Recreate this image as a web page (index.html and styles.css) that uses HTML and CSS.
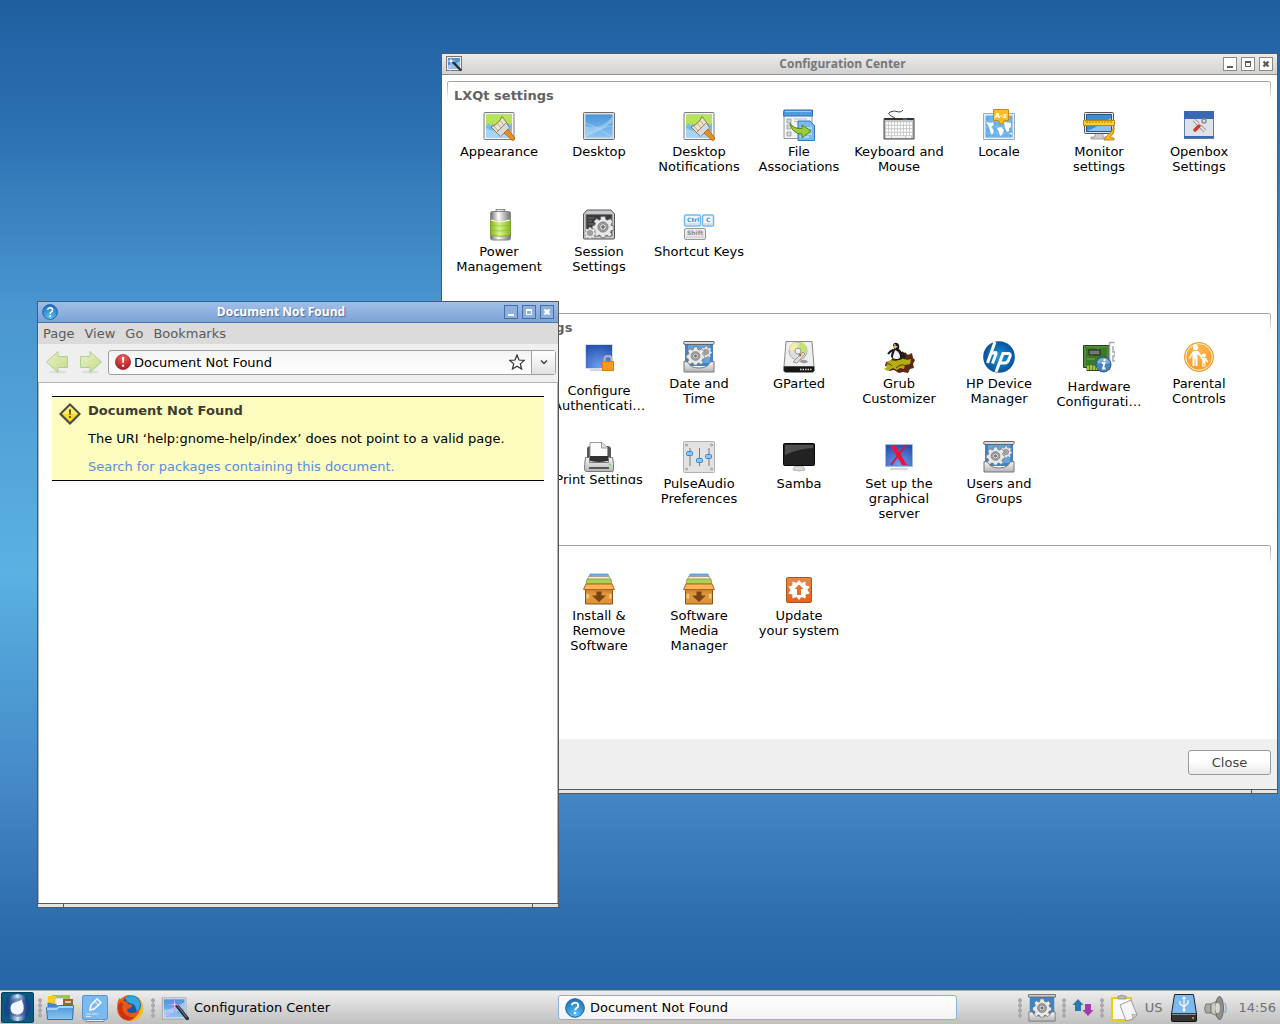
FILE: index.html
```html
<!DOCTYPE html>
<html lang="en">
<head>
<meta charset="utf-8">
<meta name="viewport" content="width=device-width, initial-scale=1">
<title>Desktop</title>
<link rel="stylesheet" href="styles.css">
</head>
<body>
<svg class="sprite" aria-hidden="true">
  <defs>
    <linearGradient id="g-sky" x1="0" y1="0" x2="0" y2="1"><stop offset="0" stop-color="#4a94d8"/><stop offset="1" stop-color="#8cc6f2"/></linearGradient>
    <linearGradient id="g-metal" x1="0" y1="0" x2="0" y2="1"><stop offset="0" stop-color="#f6f6f6"/><stop offset="1" stop-color="#b4b4b4"/></linearGradient>
    <linearGradient id="g-box" x1="0" y1="0" x2="0" y2="1"><stop offset="0" stop-color="#c27a26"/><stop offset="0.4" stop-color="#e39a3e"/><stop offset="1" stop-color="#dd9136"/></linearGradient>
    <linearGradient id="g-orange" x1="0" y1="0" x2="0" y2="1"><stop offset="0" stop-color="#e08a4c"/><stop offset="1" stop-color="#e8601c"/></linearGradient>
    <linearGradient id="g-leaf" x1="0" y1="0" x2="1" y2="1"><stop offset="0" stop-color="#ebefc0"/><stop offset="1" stop-color="#c3dc8c"/></linearGradient>
    <linearGradient id="g-cell" x1="0" y1="0" x2="1" y2="0"><stop offset="0" stop-color="#86b81e"/><stop offset="0.45" stop-color="#d8f48a"/><stop offset="1" stop-color="#84b81c"/></linearGradient>
    <linearGradient id="g-cap" x1="0" y1="0" x2="1" y2="0"><stop offset="0" stop-color="#6c6c6c"/><stop offset="0.4" stop-color="#fff"/><stop offset="1" stop-color="#707070"/></linearGradient>
    <linearGradient id="g-beam" x1="0" y1="0" x2="1" y2="0"><stop offset="0" stop-color="#c8daf0" stop-opacity="0"/><stop offset="0.5" stop-color="#d5e4f4"/><stop offset="1" stop-color="#c8daf0" stop-opacity="0"/></linearGradient>
    <radialGradient id="g-blue" cx="0.5" cy="0.9" r="0.9"><stop offset="0" stop-color="#6b9ef0"/><stop offset="1" stop-color="#2750b0"/></radialGradient>
    <radialGradient id="g-help" cx="0.5" cy="0.9" r="0.9"><stop offset="0" stop-color="#5cc4f6"/><stop offset="1" stop-color="#1b70bd"/></radialGradient>
    <radialGradient id="g-red" cx="0.5" cy="0.2" r="0.9"><stop offset="0" stop-color="#f0605a"/><stop offset="1" stop-color="#a80f1c"/></radialGradient>
    <radialGradient id="g-hp" cx="0.5" cy="0.5" r="0.6"><stop offset="0" stop-color="#1d9ae0"/><stop offset="1" stop-color="#02438e"/></radialGradient>
    <radialGradient id="g-amber" cx="0.5" cy="0.3" r="0.8"><stop offset="0" stop-color="#fbb64e"/><stop offset="1" stop-color="#f39a22"/></radialGradient>
  </defs>

  <symbol id="gear" viewBox="-10 -10 20 20">
    <g fill="#e8e8e8" stroke="#686868" stroke-width="0.7">
      <path d="M-2-9.500h4l.6 2.600 1.600.7L6.600-7.600 9-4.800 7.400-2.500l.5 1.500 2 .3v3.400l-2.300.5-.8 1.600 1.400 2.200L5.800 9 3.600 7.400l-1.500.6L1.600 9.700h-3.200L-2.200 8l-1.600-.7L-6 9-8.500 6.500-7.200 4.500-7.800 3-9.800 2.500V-1l2.200-.5.700-1.600L-8.300-5.200l2.700-2.500 2 1.500 1.300-.6z"/>
      <circle r="4.600" fill="#aaa"/><circle r="3" fill="#eee"/><circle r="1.300" fill="#777"/>
    </g>
  </symbol>

  <symbol id="appearance" viewBox="0 0 32 32">
    <rect x="1" y="3.500" width="30" height="27" rx="1" fill="#f4f4f4" stroke="#7b7b7b"/>
    <rect x="3" y="5.500" width="26" height="23" fill="#7ab9ea"/>
    <path d="M3 5.500h26v9l-3 1-3-2-3 2-4-2-4 3-3-2-1 3-2-3-3 2z" fill="#b9e356"/>
    <path d="M3 19q8 5 13 1t13 3v5.500H3z" fill="#a7d4f4"/>
    <path d="M19 7.500l6 8-10 9.500-7-7q8-3 11-10.500z" fill="#ede3cf" stroke="#6f5d43" stroke-width="0.800"/>
    <path d="M11 17l4 5M14.500 14.500l4 5M17.500 11.500l4 6" stroke="#b8a98a" fill="none"/>
    <path d="M23.500 13.500l3 5.500-9 8.500-4-4z" fill="#d9d9d9" stroke="#777" stroke-width="0.800"/>
    <path d="M21 24l4-4 6.500 8.500q.8 3-2.500 3l-5-5z" fill="#e88f1d" stroke="#a9610b" stroke-width="0.800"/>
  </symbol>

  <symbol id="services" viewBox="0 0 32 32">
    <rect x="2" y="3" width="28" height="22" fill="#3f83c8"/>
    <path d="M5 4l22 0v18H5z" fill="#64a4dd"/>
    <path d="M.5 1.500Q.5.500 2 .5h28q1.500 0 1.500 1T30 3.500H2Q.5 3.500.5 1.500z" fill="#d5d8d4" stroke="#666"/>
    <path d="M1 31V20.500l4 .5q2 6 11 6t11-6l4-.5V31z" fill="url(#g-metal)" stroke="#777"/>
    <use href="#gear" x="17" y="4.500" width="12" height="13"/>
    <use href="#gear" x="3" y="5" width="19" height="20"/>
  </symbol>

  <symbol id="package" viewBox="0 0 32 32">
    <path d="M7 1h18l1 4H6z" fill="#6fb0ec" stroke="#4786c6" stroke-width="0.700"/>
    <path d="M5.500 3.500h21l1 4h-23z" fill="#f2e8dc" stroke="#aa8872" stroke-width="0.700"/>
    <path d="M4 6h24l1 5H3z" fill="#a6d356" stroke="#6f9c28" stroke-width="0.700"/>
    <path d="M2.500 15.500h27V31h-27z" fill="url(#g-box)" stroke="#8c5414"/>
    <path d="M3 11h26l2.500 5.500H.5z" fill="#ffb25a" stroke="#a9641c"/>
    <path d="M13.500 18.500h5v4H23l-7 6.500-7-6.500h4.500z" fill="#7a4312"/>
    <path d="M3.500 21h2.500v4.500H3.500zM26 21h2.500v4.500H26z" fill="#f5c78c"/>
  </symbol>

  <symbol id="wizard" viewBox="0 0 32 32">
    <rect x="1.500" y="4.500" width="27" height="24" fill="#f6f6f6" stroke="#9a9a9a"/>
    <rect x="3" y="6" width="24" height="21" fill="url(#g-sky)"/>
    <path d="M3 18q10 0 24-9v8Q15 20 3 27z" fill="#bfe0f8" opacity=".6"/>
    <path d="M18 13l12 15" stroke="#2d2d33" stroke-width="4" stroke-linecap="round"/>
    <path d="M18.500 12.500l10.500 14" stroke="#8e8e98"/>
    <path d="M15.500 5l.7 6.300 6.300.7-6.300.7-.7 8.300-.7-8.300-6.300-.7 6.300-.7zM8 20l.6 2.400 2.400.6-2.400.6L8 26l-.6-2.400L5 23l2.400-.6z" fill="#fbe0ff" stroke="#d07cec" stroke-width="0.700"/>
  </symbol>

  <symbol id="wizard-small" viewBox="0 0 16 16">
    <rect x=".5" y=".5" width="15" height="14" fill="#f0f0f0" stroke="#777"/>
    <rect x="2" y="2" width="12" height="11" fill="#4d94d8"/>
    <path d="M2 9q6 0 12-4v8H2z" fill="#8fc4f0"/>
    <path d="M7 6l8 8.500" stroke="#2d2d33" stroke-width="2.500"/>
    <path d="M5 1v9M1 5h8M4 9v6" stroke="#f0b8fa"/>
    <circle cx="5" cy="5" r="1.300" fill="#fff"/>
  </symbol>

  <symbol id="help" viewBox="0 0 20 20">
    <circle cx="10" cy="10" r="9.300" fill="url(#g-help)" stroke="#1a5c9e"/>
    <path d="M6.800 7.200Q7.500 4.700 10.200 4.700q3 .1 3 2.700 0 1.600-1.700 2.700-1.300.9-1.300 2.300" fill="none" stroke="#fff" stroke-width="1.800"/>
    <circle cx="10.100" cy="15" r="1.200" fill="#fff"/>
  </symbol>

  <symbol id="minimise" viewBox="0 0 14 14"><path d="M4 9h6v2H4z" fill="currentColor"/></symbol>
  <symbol id="maximise" viewBox="0 0 14 14"><path d="M4.500 4.500h5v5h-5z" fill="none" stroke="currentColor"/><path d="M4 5h6" stroke="currentColor" stroke-width="2"/></symbol>
  <symbol id="shut" viewBox="0 0 14 14"><path d="M4.500 4.500l5 5m0-5l-5 5" stroke="currentColor" stroke-width="2.400"/></symbol>
</svg>

<main class="desktop">
  <section class="window config" aria-labelledby="config-title">
    <header class="titlebar">
      <svg class="title-icon" aria-hidden="true"><use href="#wizard-small"/></svg>
      <h1 class="title" id="config-title">Configuration Center</h1>
      <div class="controls">
        <button class="control" type="button" aria-label="Minimise"><svg><use href="#minimise"/></svg></button>
        <button class="control" type="button" aria-label="Maximise"><svg><use href="#maximise"/></svg></button>
        <button class="control" type="button" aria-label="Close"><svg><use href="#shut"/></svg></button>
      </div>
    </header>

    <div class="groups">
      <section class="group">
        <h2 class="group-title">LXQt settings</h2>
        <div class="items">
          <button class="item" type="button"><svg class="icon"><use href="#appearance"/></svg><span class="label">Appearance</span></button>
          <button class="item" type="button">
            <svg class="icon" viewBox="0 0 32 32"><rect x=".5" y="3.500" width="31" height="27" rx="1" fill="#ddd" stroke="#6e6e6e"/><rect x="2.500" y="5.500" width="27" height="23" fill="url(#g-sky)"/><path d="M3 17q14 5 26-9v5Q17 23 3 28z" fill="#a9d6f5" opacity=".6"/><path d="M3 14q13 5 26 14M3 26q15-8 26-9" fill="none" stroke="#b9def7" stroke-width=".6"/></svg>
            <span class="label">Desktop</span></button>
          <button class="item" type="button"><svg class="icon"><use href="#appearance"/></svg><span class="label">Desktop Notifications</span></button>
          <button class="item" type="button">
            <svg class="icon" viewBox="0 0 32 32"><path d="M1 1.500h28v28H1z" fill="#f3f3f3" stroke="#999"/><path d="M1 1h28.500v6H.5z" fill="#4f9be0" stroke="#2d6fb4"/><path d="M2 2.500h26" stroke="#9ccaf2"/><path d="M4 10h4v4H4zM4 16h4v4H4zM4 23h4v4H4z" fill="#c9d9e6" stroke="#999" stroke-width=".8"/><path d="M11 10h13M11 12.500h10" stroke="#bbb"/><path d="M15 12h12l4.500 4.500v15H15z" fill="#7db9ee" stroke="#2f78bf"/><path d="M17 19h12M17 22h12M17 25h12M17 28h9" stroke="#e3f1fd"/><path d="M7 14q3 6 12 5.500V16l9 6-9 7v-4Q9 25 7 14z" fill="#9ccc3c" stroke="#4f8613"/></svg>
            <span class="label">File Associations</span></button>
          <button class="item" type="button">
            <svg class="icon" viewBox="0 0 32 32"><path d="M12 9Q3 5 7 3t9 0q3 0 4-2" fill="none" stroke="#444"/><path d="M1 9.500h30V30H1z" fill="#c4c4c4" stroke="#444"/><path d="M1.500 10h29" stroke="#333" stroke-width="2"/><path d="M20 10h4" stroke="#4a90d9"/><path d="M3 14.500h26M3 18h26M3 21.500h26M3 25h26" stroke="#fff" stroke-width="2.500" stroke-dasharray="2.200 .8"/><path d="M3 28h26" stroke="#fff" stroke-width="1.500" stroke-dasharray="5 1 13 1"/></svg>
            <span class="label">Keyboard and Mouse</span></button>
          <button class="item" type="button">
            <svg class="icon" viewBox="0 0 32 32"><path d="M.5 4.500h31v26H.5z" fill="#e4eef7" stroke="#a2abb3"/><path d="M2.500 6.500h27v22h-27z" fill="#65aeea"/><path d="M2.500 12h27M2.500 18h27M2.500 24h27M8 6v22M14 6v22M20 6v22M26 6v22" stroke="#92c7f2" stroke-width=".7"/><path d="M3 13l5 1 2-1 1 3-3 2 2 2 1 2-2 4-2-4-1-4zM14 19l4-1 3 3-2 5-2 1-1-4zM21 13l7 1v4l-2 1 0 3-2 1-2-4zM26 24l3 0v2z" fill="#fff"/><path d="M10.500.5h15v11h-4L18.500 16l-3-4.500h-5z" fill="#fcbd1e" stroke="#cc8c08"/><text class="bubble" x="18" y="8.500">A-z</text></svg>
            <span class="label">Locale</span></button>
          <button class="item" type="button">
            <svg class="icon" viewBox="0 0 32 32"><path d="M12 24h8v4h4v2H8v-2h4z" fill="#ccc" stroke="#888" stroke-width=".7"/><rect x="1.500" y="3.500" width="29" height="21" rx="1" fill="#e4e4e4" stroke="#555"/><path d="M3.500 5.500h25v17h-25z" fill="#3f8cd0" stroke="#245a8f"/><path d="M4 22q10-4 24-13v13z" fill="#86c1f0"/><path d="M.5 11.500h31v5H.5z" fill="#fcd02a" stroke="#b98a08"/><path d="M4 12v2M7 12v2M10 12v2M13 12v2M16 12v2M19 12v2M22 12v2M25 12v2M28 12v2" stroke="#8a6606" stroke-width=".8"/><path d="M31 17.500q1 7-4 10.500l4 1v2H21q2-4 5-6 3-2 5-7.500z" fill="#f8b81c" stroke="#b97f08" stroke-width=".8"/></svg>
            <span class="label">Monitor settings</span></button>
          <button class="item" type="button">
            <svg class="icon" viewBox="0 0 32 32"><rect x="1.500" y="2.500" width="29" height="27" fill="#dfe2e8" stroke="#6a7fa8"/><path d="M1 2h30v8H1zM1 27h30v2H1z" fill="#3a68b4"/><path d="M11 11l11 11" stroke="#888" stroke-width="3.500"/><path d="M11 11l11 11M21 11l-5 5" stroke="#e5e5e5" stroke-width="2"/><path d="M12 21l4-4" stroke="#d6382e" stroke-width="3.500" stroke-linecap="round"/><circle cx="21" cy="12" r="2" fill="none" stroke="#8f8f8f" stroke-width="1.500"/></svg>
            <span class="label">Openbox Settings</span></button>
          <button class="item" type="button">
            <svg class="icon" viewBox="0 0 32 32"><path d="M13 .5h9V3h5v4H8V3h5z" fill="url(#g-cap)" stroke="#777" stroke-width=".8"/><rect x="7.500" y="2.500" width="20" height="28.500" rx="2" fill="url(#g-cap)" stroke="#888"/><path d="M7.500 11q10 3 20 0v15q-10 3-20 0z" fill="url(#g-cell)" stroke="#75a31b" stroke-width=".7"/><path d="M8 16q9 2 19 0M8 21q9 2 19 0" fill="none" stroke="#86b62c" stroke-width=".6"/><path d="M8 11q9 3 19 0" fill="none" stroke="#f7ffe4" stroke-width="1.200"/></svg>
            <span class="label">Power Management</span></button>
          <button class="item" type="button">
            <svg class="icon" viewBox="0 0 32 32"><path d="M4 1h24l3.500 4v24q0 1-1 1h-29q-1 0-1-1V5z" fill="#c9c9c9" stroke="#555"/><path d="M3 5.500h26V27H3z" fill="#3a3b40" stroke="#777"/><path d="M5 9h6M5 12h4M5 15h6" stroke="#777"/><use href="#gear" x="9" y="6" width="22" height="24"/><use href="#gear" x="1" y="18" width="12" height="12"/></svg>
            <span class="label">Session Settings</span></button>
          <button class="item" type="button">
            <svg class="icon" viewBox="0 0 32 32"><g fill="#f2f4f6" stroke="#6cbcf2" stroke-width="1.500"><rect x="1.500" y="6" width="16" height="11" rx="1.500"/><rect x="19.500" y="6" width="11" height="11" rx="1.500"/></g><rect x="1.500" y="19.500" width="21" height="11" rx="1.500" fill="#e9e9e9" stroke="#999"/><path d="M3 28h18M3 15h13M21 15h8" stroke="#c4c9cd"/><g class="key-legend"><text x="4" y="13" fill="#3f93d6">Ctrl</text><text x="23" y="13" fill="#3f93d6">C</text><text x="4" y="26" fill="#888">Shift</text></g></svg>
            <span class="label">Shortcut Keys</span></button>
        </div>
      </section>

      <section class="group">
        <h2 class="group-title">System settings</h2>
        <div class="items items-second">
          <button class="item item-low" type="button">
            <svg class="icon" viewBox="0 0 32 32"><path d="M2.500 3.500h27v24h-27z" fill="url(#g-blue)" stroke="#d3dff2"/><path d="M7 28h14v2H7z" fill="#cdd8e2"/><path d="M21.500 22v-4q0-3 3.500-3t3.500 3v4" fill="none" stroke="#b8b8b8" stroke-width="2"/><rect x="19.500" y="20.500" width="11" height="9" fill="#fb9a1a" stroke="#e47c05"/></svg>
            <span class="label">Configure Authenticati…</span></button>
          <button class="item" type="button"><svg class="icon"><use href="#services"/></svg><span class="label">Date and Time</span></button>
          <button class="item" type="button">
            <svg class="icon" viewBox="0 0 32 32"><path d="M3 .5h26l2 25H1z" fill="#efefef" stroke="#888"/><circle cx="15" cy="10" r="9" fill="#dedede" stroke="#aaa"/><path d="M15 10l2-9q7 2 7 10l-4 4z" fill="#c6e46c"/><path d="M6 9q1-6 7-8l2 8z" fill="#f5f0a0"/><circle cx="15" cy="10" r="3" fill="#eee" stroke="#999"/><path d="M10 21l10-10 2 2-8 9z" fill="#ddd" stroke="#888" stroke-width=".8"/><circle cx="17" cy="14" r="1.300" fill="#e3501e"/><path d="M16 20q7-3 9 1-5 3-9-1z" fill="#999"/><path d="M.5 25.500h31V30l-2 1.500h-27l-2-1.500z" fill="#161616"/><path d="M17 28.500h12" stroke="#ddd" stroke-width="1.500" stroke-dasharray="1.500 1"/></svg>
            <span class="label">GParted</span></button>
          <button class="item" type="button">
            <svg class="icon" viewBox="0 0 32 32"><path d="M11 16q4-5 9-2l2-3 3 3 4-2 1 5 2 2-2 4 1 4-4 1-2 4-5-1-4 1-5-3-5 1 0-4-4-1 1-4 4-1z" fill="#5c2612"/><path d="M3 23l4-4 6 1 7-3 4 2 4-1-1 5-5 1-1 4-4-1-3 2-4-2-5 3-4-2 3-2z" fill="#b2ae10"/><path d="M2 24q4-3 7 1M13 27q5-5 10-2" fill="none" stroke="#6d2b15"/><path d="M10 4q1-3 4-2t2 6q4 3 4 8 0 3-5 3t-7-3q0-5 3-8z" fill="#17191e"/><path d="M12 9q5 2 5 7 0 2-4 2t-3-3z" fill="#f0f1f4"/><path d="M5 13q3-4 6-4M19 11q3 3 2 7" fill="none" stroke="#17191e" stroke-width="2"/><path d="M10 5h5l-3 3z" fill="#f6c51a"/><circle cx="12" cy="4" r=".8" fill="#fff"/></svg>
            <span class="label">Grub Customizer</span></button>
          <button class="item" type="button">
            <svg class="icon" viewBox="0 0 32 32"><circle cx="16" cy="16" r="15.800" fill="url(#g-hp)"/><path d="M12 1L4.500 22M8 13q6-3 5 0l-3.500 9.500" fill="none" stroke="#fff" stroke-width="3"/><path d="M13 31l7-18.500h5q3 0 2 3L25.500 19q-1 3-4 3h-4" fill="none" stroke="#fff" stroke-width="3"/></svg>
            <span class="label">HP Device Manager</span></button>
          <button class="item item-mid" type="button">
            <svg class="icon" viewBox="0 0 32 32"><path d="M.5 4.500H26v22h-9v3H4v-3H.5z" fill="#4d8a34" stroke="#24491a"/><path d="M3 7h21v17H3z" fill="#3d7728"/><path d="M4 18h8M15 7v2M5 14h5M18 17h5" stroke="#78b055"/><rect x="6" y="9" width="11" height="5" fill="#777" stroke="#1e1e1e"/><path d="M5 25v4M8 24v5M11 25v4M14 24v5" stroke="#d4d23c" stroke-width="1.500"/><path d="M31.500 1.500H28Q26.500 1 26.500 3v26M30 5v6h2v4h-2v5h2" fill="none" stroke="#aaa" stroke-width="1.500"/><circle cx="20.500" cy="23.500" r="7.500" fill="#4583bd" stroke="#245787"/><path d="M14 22q1-5 6.500-5t6.500 5q-6 2-13 0z" fill="#7bacdb"/><path d="M19 22h2.500l-1.500 5.500h2.500" fill="none" stroke="#fff" stroke-width="1.800"/><circle cx="21.500" cy="19" r="1.200" fill="#fff"/></svg>
            <span class="label">Hardware Configurati…</span></button>
          <button class="item" type="button">
            <svg class="icon" viewBox="0 0 32 32"><circle cx="16" cy="16" r="14.500" fill="url(#g-amber)" stroke="#e89b32"/><circle cx="16" cy="16" r="13.300" fill="none" stroke="#fff3dc"/><g fill="#fff"><circle cx="12.500" cy="6.500" r="2.700"/><path d="M10 10h5l5 6-1.200 1-4.300-4v12h-2v-7h-1v7h-2v-12l-2.500 5-1.500-.8z"/><circle cx="21" cy="14.500" r="2"/><path d="M19.500 17h3.500l2.500 4-1 .7-2-2.500V26h-1v-4h-1v4h-1.200v-7l-2-2 .7-1z"/></g></svg>
            <span class="label">Parental Controls</span></button>
          <button class="item item-clipped" type="button">
            <svg class="icon" viewBox="0 1 32 32"><path d="M4 9q0-3 4-3h16q4 0 4 3v11H4z" fill="#555"/><path d="M7 2.500h12l5.500 5V18H7z" fill="#fafafa" stroke="#999"/><path d="M18.500 2.500v5.500H24" fill="#ddd" stroke="#999"/><path d="M7 16h18v5q-9 2-18 0z" fill="#303030"/><path d="M2.500 17.500h4v5h19v-5h4q1.500 6 1 11t-2 3h-25q-2 0-2-3t1-11z" fill="url(#g-metal)" stroke="#777"/><path d="M6 28h20" stroke="#333" stroke-width="1.500"/><circle cx="27" cy="24.500" r="1" fill="#5fdc28"/></svg>
            <span class="label">Print Settings</span></button>
          <button class="item" type="button">
            <svg class="icon" viewBox="0 0 32 32"><rect x=".5" y=".5" width="31" height="31" rx="1" fill="#e2e2e2" stroke="#b0b0b0"/><g fill="none" stroke="#888" stroke-width=".8"><circle cx="3.500" cy="4" r="1"/><circle cx="28.500" cy="4" r="1"/><circle cx="3.500" cy="28" r="1"/><circle cx="28.500" cy="28" r="1"/></g><path d="M7 7v18M16.500 7v18M26 7v18" stroke="#777"/><g fill="#88c5f5" stroke="#3b87c8"><rect x="3.500" y="10.500" width="6" height="4" rx="1"/><rect x="13.500" y="17.500" width="6" height="4" rx="1"/><rect x="22.500" y="13.500" width="6" height="4" rx="1"/></g></svg>
            <span class="label">PulseAudio Preferences</span></button>
          <button class="item" type="button">
            <svg class="icon" viewBox="0 0 32 32"><path d="M12 25h8l2 4q-6 2-12 0z" fill="#d8d8d8" stroke="#aaa" stroke-width=".8"/><rect x=".5" y="2.500" width="31" height="22" rx="1" fill="#222" stroke="#080808"/><path d="M2 4h28v3Q14 8 2 14z" fill="#505050"/></svg>
            <span class="label">Samba</span></button>
          <button class="item" type="button">
            <svg class="icon" viewBox="0 0 32 32"><path d="M2.500 3.500h27v22h-27z" fill="url(#g-blue)" stroke="#a8bce2"/><path d="M7 27h18v2H7z" fill="#d0d9dd"/><path d="M7 4l5 0 12 20h-5z" fill="#f0123c"/><path d="M23 4L8 24" stroke="#d3183c" stroke-width="2"/></svg>
            <span class="label">Set up the graphical server</span></button>
          <button class="item" type="button"><svg class="icon"><use href="#services"/></svg><span class="label">Users and Groups</span></button>
        </div>
      </section>

      <section class="group">
        <div class="items items-third">
          <button class="item" type="button"><svg class="icon"><use href="#package"/></svg><span class="label">Install &amp; Remove Software</span></button>
          <button class="item" type="button"><svg class="icon"><use href="#package"/></svg><span class="label">Software Media Manager</span></button>
          <button class="item" type="button">
            <svg class="icon" viewBox="0 0 32 32"><rect x="3.500" y="4.500" width="25" height="25" rx="1.500" fill="url(#g-orange)" stroke="#b5501c"/><path d="M16 7l2.500 3 4-1.500.2 4 4 1-2.200 3.500 2.200 3.500-4 1-.2 4-4-1.500L16 27l-2.500-3-4 1.500-.2-4-4-1L7.500 17l-2.200-3.500 4-1 .2-4 4 1.500z" fill="#fff"/><path d="M16 11.500l4.500 4.500h-2.500v6h-4v-6h-2.500z" fill="#e3702c"/></svg>
            <span class="label">Update<br>your system</span></button>
        </div>
      </section>
    </div>

    <footer class="actions"><button class="close" type="button">Close</button></footer>
    <div class="grip"></div>
  </section>

  <section class="window document" aria-labelledby="document-title">
    <header class="titlebar">
      <svg class="title-icon" aria-hidden="true"><use href="#help"/></svg>
      <h1 class="title" id="document-title">Document Not Found</h1>
      <div class="controls">
        <button class="control" type="button" aria-label="Minimise"><svg><use href="#minimise"/></svg></button>
        <button class="control" type="button" aria-label="Maximise"><svg><use href="#maximise"/></svg></button>
        <button class="control" type="button" aria-label="Close"><svg><use href="#shut"/></svg></button>
      </div>
    </header>
    <nav class="menubar">
      <button type="button">Page</button><button type="button">View</button><button type="button">Go</button><button type="button">Bookmarks</button>
    </nav>
    <div class="toolbar">
      <button class="arrow" type="button" aria-label="Back"><svg viewBox="0 0 24 24"><ellipse cx="13" cy="22" rx="9" ry="1.500" fill="#ddd"/><path d="M1.500 12L13 1.500v5h9.500v11H13v5z" fill="url(#g-leaf)" stroke="#b0cc9c"/></svg></button>
      <button class="arrow" type="button" aria-label="Forward"><svg viewBox="0 0 24 24"><ellipse cx="11" cy="22" rx="9" ry="1.500" fill="#ddd"/><path d="M22.500 12L11 1.500v5H1.500v11H11v5z" fill="url(#g-leaf)" stroke="#b0cc9c"/></svg></button>
      <div class="address">
        <svg class="address-icon" viewBox="0 0 16 16" aria-hidden="true"><circle cx="8" cy="8" r="7.600" fill="url(#g-red)" stroke="#8f1a22" stroke-width=".6"/><path d="M7 3h2.200l-.4 6H7.400z" fill="#fff"/><circle cx="8.100" cy="11.800" r="1.200" fill="#fff"/></svg>
        <input class="address-input" type="text" aria-label="Location" value="Document Not Found">
        <button class="star" type="button" aria-label="Bookmark"><svg viewBox="0 0 16 16"><path d="M8 1l2 5 5.300.4-4 3.500L12.600 15 8 12.200 3.400 15l1.300-5.100-4-3.500L6 6z" fill="none" stroke="#333" stroke-width="1.200"/></svg></button>
        <button class="drop" type="button" aria-label="History"><svg viewBox="0 0 10 10"><path d="M2 3.500L5 6.500l3-3" fill="none" stroke="#444" stroke-width="1.500"/></svg></button>
      </div>
    </div>
    <article class="page">
      <div class="notice">
        <svg class="notice-icon" viewBox="0 0 22 22" aria-hidden="true"><path d="M11 1l10 10-10 10L1 11z" fill="#4a4a46" stroke="#4a4a46" stroke-width="1.500" stroke-linejoin="round"/><path d="M11 3l8 8-8 8-8-8z" fill="#f8d820"/><path d="M11 3l8 8-16 0z" fill="#fbec70"/><path d="M10 6.500h2l-.4 5.500h-1.200z" fill="#4b400c"/><circle cx="11" cy="14" r="1.100" fill="#4b400c"/></svg>
        <div class="notice-text">
          <h2>Document Not Found</h2>
          <p>The URI ‘help:gnome-help/index’ does not point to a valid page.</p>
          <p><a href="#packages">Search for packages containing this document.</a></p>
        </div>
      </div>
    </article>
    <div class="grip"></div>
  </section>
</main>

<footer class="panel">
  <button class="start" type="button" aria-label="Menu"><svg viewBox="0 0 33 31"><rect x=".5" y=".5" width="32" height="30" rx="1.500" fill="#075a80" stroke="#03425f"/><circle cx="16.500" cy="15.500" r="13.500" fill="#1c4486"/><path d="M8 4.500q8.500-5 17 0v22q-8.500 5-17 0z" fill="url(#g-beam)"/><circle cx="16.500" cy="15.500" r="9.500" fill="#2c5796" opacity=".5"/><path d="M20.500 7q1 3 2 6 1.500 9-6 9.500-7 0-7-6.500 0-5 6-6 4-1 5-3z" fill="#f1f7fb"/></svg></button>
  <span class="handle"></span>
  <button class="launcher" type="button" aria-label="Files"><svg viewBox="0 0 28 28"><path d="M6 1h18v12H6z" fill="#9cc650"/><path d="M2 2h8v9H2z" fill="#fbcc22"/><path d="M9 4h9v9H9z" fill="#f4f0e8" stroke="#aaa" stroke-width=".6"/><path d="M17 5h10v8H17z" fill="#90663e"/><path d="M19 7h6v2h-6z" fill="#ddc7a8"/><path d="M1.500 8.500V25h25V12H12l-2-2z" fill="#4286c8"/><path d="M.5 13.500h10l2-2h15l-1 14h-25z" fill="url(#g-sky)" stroke="#2f70b0"/><path d="M1 13.500h10l2-1.500h14v2H13l-2 2H1z" fill="#a9d3f6"/></svg></button>
  <button class="launcher" type="button" aria-label="Editor"><svg viewBox="0 0 28 28"><path d="M5 24h18v3.500H5z" fill="#eee" stroke="#888"/><rect x="1.500" y="1.500" width="25" height="24" rx="1.500" fill="#7cb9f0" stroke="#5794d0"/><path d="M9 16l1-5 6-6 4 3.500-7 6.500z" fill="none" stroke="#fff" stroke-width="1.500"/><path d="M14 7.500l3.500 3.500" stroke="#fff"/><path d="M5 20h13M5 22.500h6" stroke="#d5eafc" stroke-dasharray="5 1"/></svg></button>
  <button class="launcher" type="button" aria-label="Browser"><svg viewBox="0 0 28 28"><circle cx="14" cy="14" r="13" fill="#e96616"/><path d="M14 1q9 0 12 8t-1 13-11 5q7-3 7-9z" fill="#f8bc20"/><circle cx="15.500" cy="11" r="9.500" fill="#1857a6"/><path d="M9 4q8-5 14 2 3 7-2 12-1-6-4-8-6-1-8-6z" fill="#35a7df"/><path d="M1.500 8l2-4 2 3q5-1 7 3l4 1q-1 3-5 4-1 4 4 4 6 0 8-4 0 8-9 10Q5 27 2 19z" fill="#e75718"/><path d="M2 11q2-3 5-2-2 7 2 11t10 3q-5 5-11 2t-6-14z" fill="#c9340f"/></svg></button>
  <span class="handle"></span>
  <div class="tasks">
    <button class="task" type="button"><svg class="task-icon task-icon-large"><use href="#wizard"/></svg>Configuration Center</button>
    <button class="task task-active" type="button"><svg class="task-icon"><use href="#help"/></svg>Document Not Found</button>
  </div>
  <div class="tray">
    <span class="handle"></span>
    <svg class="tray-icon" viewBox="0 0 32 32"><path d="M2 3h28v22H2z" fill="#3f83c8"/><path d="M.5.500h31v3H.5z" fill="#c8cbc8" stroke="#666"/><path d="M1 31V20.500h4q2 5 11 5t11-5h4V31z" fill="url(#g-metal)" stroke="#777"/><use href="#gear" x="5" y="5" width="22" height="22"/></svg>
    <span class="handle"></span>
    <svg class="tray-icon tray-icon-net" viewBox="0 0 22 22"><path d="M6 2l5.500 6H9v6H3V8H.5z" fill="#267cb0"/><path d="M16 19l-5.500-6H13V7h6v6h2.500z" fill="#a53ab0"/></svg>
    <span class="handle"></span>
    <svg class="tray-icon" viewBox="0 0 28 28"><path d="M2 4h19v22H2z" fill="#fafafa" stroke="#f2ca12" stroke-width="2"/><path d="M8 2h2q2-2 4 0h2v3H8z" fill="#bbb" stroke="#888" stroke-width=".8"/><path d="M10 11l11-5 6 15-4 4-7 2z" fill="#f5f5f5" stroke="#888" stroke-width=".8"/><path d="M27 21l-5-1 1 5z" fill="#ccc" stroke="#888" stroke-width=".5"/></svg>
    <span class="layout">US</span>
    <svg class="tray-icon" viewBox="0 0 28 28"><path d="M4.500.5h19L26.500 20h-25z" fill="#7cb9f0" stroke="#222"/><path d="M1.500 20h25v6q0 1.500-1 1.500h-23q-1 0-1-1.500z" fill="#333" stroke="#111"/><path d="M2 20.500h24" stroke="#888"/><path d="M14 4v12M10 7v3l4 3 4-4V6" fill="none" stroke="#fff" stroke-width="1.200"/><path d="M14 2l2 3h-4z" fill="#fff"/><circle cx="14" cy="16" r="1.500" fill="#fff"/><circle cx="23" cy="24" r="1" fill="#f5a21d"/></svg>
    <svg class="tray-icon" viewBox="0 0 28 28"><path d="M3 10h5v9H3q-3-4.500 0-9z" fill="#a9a9a4" stroke="#777"/><path d="M8 10q5-1 9-7v23q-4-6-9-7z" fill="#c9cac4" stroke="#777"/><ellipse cx="16.500" cy="14" rx="4" ry="11.500" fill="#8e8f8a" stroke="#6c6c68"/><ellipse cx="14.500" cy="14" rx="2.300" ry="5" fill="#d9d9d4"/><path d="M22 9q2 5 0 10" fill="none" stroke="#8cb5de" stroke-width="1.500"/></svg>
    <time class="clock">14:56</time>
  </div>
</footer>
</body>
</html>
```

FILE: styles.css
```css
* {
  box-sizing: border-box;
}

body {
  display: flex;
  flex-direction: column;
  min-height: 100vh;
  margin: 0;
  font: 13px/15px "DejaVu Sans", sans-serif;
  color: #000;
  background: linear-gradient(#1f5fa0 0%, #2b70b1 12%, #4a96d0 30%, #57abde 50%, #5ab1e2 56%, #509fd6 65%, #4488c6 77%, #2d6dae 90%, #2161a2 100%);
}

button,
input {
  padding: 0;
  border: 0;
  background: none;
  color: inherit;
  font: inherit;
}

h1,
h2,
p {
  margin: 0;
}

svg {
  display: block;
  flex: none;
}

.sprite {
  position: absolute;
  width: 0;
  height: 0;
}

.desktop {
  position: relative;
  flex: 1;
}

/* Windows */
.window {
  position: absolute;
  display: flex;
  flex-direction: column;
  border: 1px solid #56585c;
  background: #fff;
}

.config {
  top: 53px;
  left: 441px;
  width: 837px;
  min-height: 741px;
}

.document {
  top: 301px;
  left: 37px;
  width: 522px;
  min-height: 607px;
}

.titlebar {
  display: flex;
  align-items: center;
  height: 21px;
  padding: 0 4px;
  border-bottom: 1px solid #8e8e8e;
  background: linear-gradient(#ebebe9, #d3d2d0);
  color: #74777c;
}

.document .titlebar {
  border-color: #4f74a8;
  background: linear-gradient(#a0bfe8, #7ba3d6);
  color: #fff;
  text-shadow: 1px 1px 1px #4a6a98;
}

.title-icon {
  width: 16px;
  height: 16px;
}

.title {
  flex: 1;
  font: bold 12px/18px "Open Sans", sans-serif;
  text-align: center;
}

.controls {
  display: flex;
  gap: 4px;
}

.control {
  width: 14px;
  height: 14px;
  border: 1px solid #8c8a84;
  background: #fff;
  color: #5c5c58;
}

.control svg {
  width: 14px;
  height: 14px;
  margin: -1px;
}

.document .control {
  border-color: #466ea4;
  background: #8db0df;
  color: #fff;
}

.grip {
  height: 4px;
  border-top: 1px solid #56585c;
  background: linear-gradient(90deg, transparent 25px, #56585c 25px, #56585c 26px, transparent 26px, transparent calc(100% - 26px), #56585c calc(100% - 26px), #56585c calc(100% - 25px), transparent calc(100% - 25px)), #e4e4e2;
}

/* Configuration Center */
.groups {
  flex: 1;
  padding: 6px 6px 0 5px;
}

.group {
  height: 232px;
  border-top: 1px solid #a3a3a3;
  border-radius: 3px 3px 0 0;
  background:
    linear-gradient(#a3a3a3, transparent) left top / 1px 18px no-repeat,
    linear-gradient(#a3a3a3, transparent) right top / 1px 18px no-repeat;
}

.group:last-child {
  height: 193px;
}

.group-title {
  height: 27px;
  padding: 6px 7px 0;
  color: #636363;
  font-size: 13px;
  line-height: 15px;
}

.items {
  display: grid;
  grid-template-columns: repeat(auto-fill, 100px);
  grid-auto-rows: 100px;
  padding-left: 2px;
}

.items-second > :first-child,
.items-second > :nth-child(8),
.items-third > :first-child {
  grid-column-start: 2;
}

.items-third {
  padding-top: 27px;
}

.item {
  display: flex;
  flex-direction: column;
  align-items: center;
  gap: 3px;
}

.item-mid {
  gap: 6px;
}

.item-low {
  gap: 10px;
}

.item-clipped {
  gap: 0;
}

.item-clipped .label {
  height: 12px;
  margin-top: -1px;
  overflow: hidden;
}

.icon {
  width: 32px;
  height: 32px;
}

.label {
  max-width: 92px;
  text-align: center;
}

.bubble {
  fill: #fff;
  font: bold 7px "DejaVu Sans", sans-serif;
  text-anchor: middle;
}

.key-legend {
  font: bold 6px "DejaVu Sans", sans-serif;
}

.actions {
  display: flex;
  justify-content: flex-end;
  padding: 11px 6px 14px;
  background: #efefef;
}

.close {
  width: 83px;
  height: 25px;
  border: 1px solid #9a9a9a;
  border-radius: 3px;
  background: linear-gradient(#fff 45%, #e9e9e9);
  color: #444;
}

/* Document window */
.menubar {
  display: flex;
  gap: 10px;
  height: 21px;
  padding: 0 5px;
  background: #dbdbdb;
  color: #5a5a5a;
}

.toolbar {
  display: flex;
  align-items: center;
  gap: 10px;
  height: 39px;
  padding: 0 2px 2px 7px;
  border-bottom: 1px solid #b4b4b4;
  background: #efefef;
}

.arrow,
.arrow svg {
  width: 24px;
  height: 24px;
}

.address {
  display: flex;
  flex: 1;
  align-items: center;
  height: 25px;
  margin-left: -5px;
  padding-left: 6px;
  border: 1px solid #9f9f9f;
  border-radius: 3px;
  background: linear-gradient(#f4f4f4, #fff);
}

.address-icon,
.star svg {
  width: 16px;
  height: 16px;
}

.address-input {
  flex: 1;
  min-width: 0;
  padding-left: 3px;
}

.star {
  padding-right: 6px;
}

.drop {
  display: flex;
  align-items: center;
  justify-content: center;
  width: 24px;
  height: 23px;
  border-left: 1px solid #9f9f9f;
  background: linear-gradient(#fff, #e2e2e2);
}

.drop svg {
  width: 10px;
  height: 10px;
}

.page {
  flex: 1;
  padding: 13px;
  border: solid #b4b4b4;
  border-width: 0 1px;
}

.notice {
  display: flex;
  gap: 7px;
  padding: 6px 7px;
  border: solid #000;
  border-width: 1px 0;
  background: #fcfcbe;
}

.notice-icon {
  width: 22px;
  height: 22px;
}

.notice-text {
  display: flex;
  flex-direction: column;
  gap: 13px;
}

.notice h2 {
  color: #3c3c30;
  font-size: 13px;
  line-height: 15px;
}

.notice a {
  color: #5b8de0;
  text-decoration: none;
}

/* Panel */
.panel {
  display: flex;
  align-items: center;
  height: 34px;
  padding: 0 4px 0 1px;
  border-top: 1px solid #a8a8a8;
  background: linear-gradient(#ededed, #c0c0c0);
}

.start svg {
  width: 33px;
  height: 31px;
}

.handle {
  flex: none;
  width: 4px;
  height: 20px;
  margin: 0 4px;
  background: radial-gradient(closest-side, #aaa 80%, transparent) 0 0 / 4px 5px;
}

.launcher {
  margin-right: 7px;
}

.launcher svg {
  width: 28px;
  height: 28px;
}

.launcher + .handle {
  margin-left: 0;
}

.tasks {
  display: flex;
  flex: 1;
}

.task {
  display: flex;
  align-items: center;
  gap: 5px;
  width: 399px;
  height: 25px;
  padding-left: 6px;
  border: 1px solid transparent;
  border-radius: 3px;
}

.task-active {
  border-color: #86b3e4;
  background: linear-gradient(#fff, #f3f3f3);
}

.task-icon {
  width: 20px;
  height: 20px;
}

.task-icon-large {
  width: 28px;
  height: 28px;
  margin-left: -5px;
}

.tray {
  display: flex;
  align-items: center;
  gap: 5px;
  color: #707070;
}

.tray .handle {
  margin: 0 1px;
}

.tray-icon {
  width: 28px;
  height: 28px;
}

.tray-icon-net {
  width: 22px;
  height: 22px;
}

.layout {
  padding: 0 2px;
}

.clock {
  padding-left: 3px;
}
```
